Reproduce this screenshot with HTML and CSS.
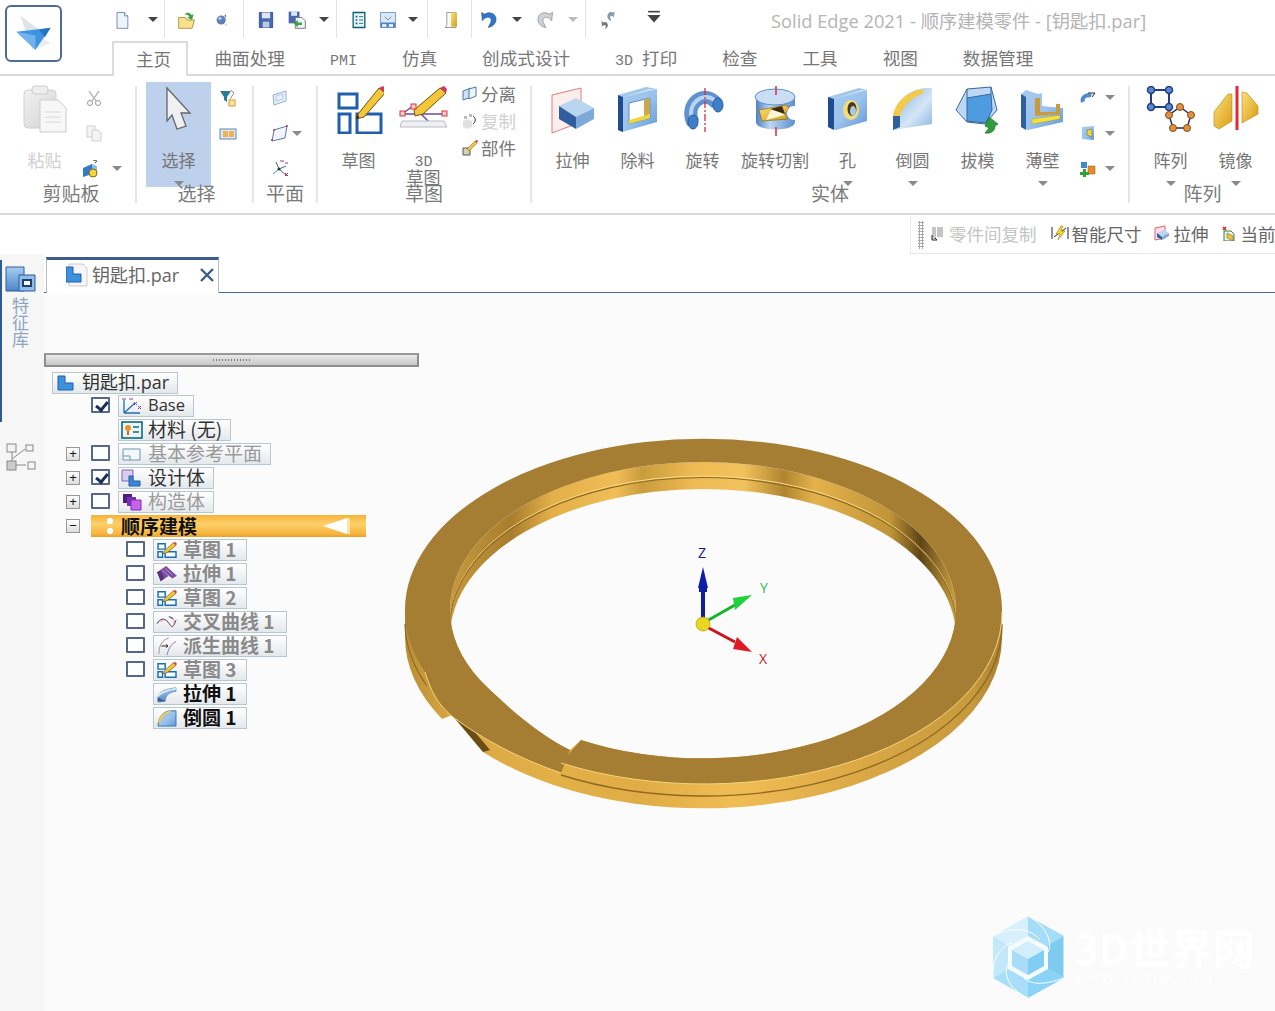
FILE: index.html
```html
<!DOCTYPE html>
<html lang="zh">
<head>
<meta charset="utf-8">
<title>Solid Edge 2021</title>
<link rel="stylesheet" href="styles.css">
</head>
<body>
<svg class="defs" aria-hidden="true">
  <defs>
    <linearGradient id="bl" x1="0" y1="0" x2="1" y2="1"><stop offset="0" stop-color="#a8cbee"/><stop offset=".55" stop-color="#9ac2ec"/><stop offset="1" stop-color="#5f97d6"/></linearGradient>
    <linearGradient id="bv" x1="0" y1="0" x2="0" y2="1"><stop offset="0" stop-color="#a9cdee"/><stop offset="1" stop-color="#4b86cc"/></linearGradient>
    <linearGradient id="bc" x1="0" y1="0" x2="1" y2="0"><stop offset="0" stop-color="#4f80c0"/><stop offset=".35" stop-color="#bcd6f0"/><stop offset="1" stop-color="#5c90cf"/></linearGradient>
    <linearGradient id="br" x1="0" y1="0" x2="1" y2="1"><stop offset="0" stop-color="#7fafe0"/><stop offset=".6" stop-color="#d5e6f6"/><stop offset="1" stop-color="#8ab4e2"/></linearGradient>
    <linearGradient id="yl" x1="0" y1="0" x2="1" y2="1"><stop offset="0" stop-color="#fbe07a"/><stop offset="1" stop-color="#d99b14"/></linearGradient>
    <linearGradient id="clip" x1="0" y1="0" x2="1" y2="1"><stop offset="0" stop-color="#f2f2f2"/><stop offset="1" stop-color="#d2d2d2"/></linearGradient>
    <linearGradient id="wall" x1="0" y1="0" x2="1" y2="0">
      <stop offset="0" stop-color="#b98d35"/><stop offset=".08" stop-color="#d9a843"/><stop offset=".25" stop-color="#e3af47"/><stop offset=".4" stop-color="#e0ac45"/>
      <stop offset=".55" stop-color="#f0bd55"/><stop offset=".75" stop-color="#dca946"/><stop offset=".95" stop-color="#c69a3c"/><stop offset="1" stop-color="#a87f30"/>
    </linearGradient>
    <linearGradient id="iwall" x1="0" y1="0" x2="1" y2="0">
      <stop offset="0" stop-color="#c59a3d"/><stop offset=".12" stop-color="#a87d2e"/><stop offset=".2" stop-color="#e2af48"/><stop offset=".33" stop-color="#f0bd56"/><stop offset=".38" stop-color="#c99c3d"/>
      <stop offset=".48" stop-color="#eeba53"/><stop offset=".58" stop-color="#f2c25c"/><stop offset=".66" stop-color="#b08530"/><stop offset=".72" stop-color="#e4b24b"/>
      <stop offset=".87" stop-color="#c09538"/><stop offset=".93" stop-color="#5f4415"/><stop offset="1" stop-color="#caa040"/>
    </linearGradient>
    <symbol id="sk" viewBox="0 0 24 20">
      <path d="M2 3h8v6H2zM2 12h5v6H2zM10 12h12v6H10z" fill="#fff" stroke="#1570b8" stroke-width="1.6"/>
      <path d="M9 11 19 2l3 3-10 8-4 1z" fill="#f2c335" stroke="#7a5a12" stroke-width=".7"/><path d="M19 2l3 3 1-2-2-2z" fill="#d8344c"/>
    </symbol>
  </defs>
</svg>

<div class="top">
  <div class="logo-wrap">
    <div class="logo">
      <svg viewBox="0 0 57 57" width="54" height="54"><path d="M14 9 38 27 27 45z" fill="#dfe3ec"/><path d="M27 27 46 38 29 45z" fill="#e9edf2"/><path d="M10 26 46 22 30 45z" fill="#3f94e0"/><path d="M10 26 30 30 30 45z" fill="#73b3ec"/><path d="M34 24 46 22 40 32z" fill="#2574c4"/></svg>
    </div>
  </div>
  <div class="top-right">
    <div class="qat">
      <div class="qg qa">
        <svg class="qi" viewBox="0 0 24 24"><path d="M6 3h9l4 4v15H6z" fill="#eef4fb" stroke="#5c7ea8"/><path d="M15 3v4h4" fill="#fff" stroke="#5c7ea8"/></svg>
        <i class="caret dk"></i>
      </div>
      <div class="qg qb">
        <svg class="qi" viewBox="0 0 24 24"><path d="M2 9h8l2 3h9l-3 10H2z" fill="#f8e08c" stroke="#a88a2c"/><path d="M9 5c4-3 7-2 8 1l3-1-2 7-6-3 3-1c-1-2-3-3-6-3z" fill="#3da33a"/></svg>
        <svg class="qi" viewBox="0 0 24 24"><circle cx="11" cy="12" r="5.5" fill="#5f7fb8"/><circle cx="9.500" cy="10" r="2" fill="#b9cbea"/><path d="M15 5l2 2-1 2z" fill="#223c6e"/><path d="M13 18l6-1-2 2z" fill="#c9c9c9"/></svg>
      </div>
      <div class="qg qc">
        <svg class="qi" viewBox="0 0 24 24"><path d="M4 3h16v18H4z" fill="#4868ae" stroke="#2f4684"/><path d="M7 3h10v7H7z" fill="#dce6f4"/><path d="M8 14h8v7H8z" fill="#bccbe4"/></svg>
        <svg class="qi" viewBox="0 0 24 24"><path d="M2 2h13v14H2z" fill="#4868ae"/><path d="M5 2h7v5H5z" fill="#dce6f4"/><path d="M10 9h8l4 4v9H10z" fill="#eef4fb" stroke="#667"/><path d="M8 16l5-4v3h5v3h-5v3z" fill="#3da33a"/></svg>
        <i class="caret dk"></i>
      </div>
      <div class="qg qd">
        <svg class="qi" viewBox="0 0 24 24"><path d="M5 3h14v18H5z" fill="#eaf4f4" stroke="#0f5f78" stroke-width="1.6"/><path d="M8 7h2v2H8zM8 11h2v2H8zM8 15h2v2H8z" fill="#0f5f78"/><path d="M12 8h5M12 12h5M12 16h5" stroke="#0f5f78"/></svg>
        <svg class="qi" viewBox="0 0 24 24"><path d="M3 3h18v18H3z" fill="#d8e8f6" stroke="#6a8fbc"/><path d="M3 15h18v6H3z" fill="#4e86c4"/><path d="M8 8l4 4 4-4" stroke="#777" fill="none"/><path d="M5 17h5v3H5zM13 17h5v3h-5z" fill="#fff"/></svg>
        <i class="caret dk"></i>
      </div>
      <div class="qg qe">
        <svg class="qi" viewBox="0 0 24 24"><path d="M5 21c2-1 2-3 2-5V3h11v18z" fill="none" stroke="#888"/><path d="M12 3h7v17h-7z" fill="url(#yl)"/></svg>
      </div>
      <div class="qg qf">
        <svg class="qi" viewBox="0 0 24 24"><path d="M3 3l1 10 3-3c5-3 9 0 7 5l-3 6c7-1 11-7 9-13-2-5-9-6-13-3L3 3z" fill="#3174c8" stroke="#1e4f96" stroke-width=".6"/></svg>
        <i class="caret dk"></i>
        <svg class="qi" viewBox="0 0 24 24"><path d="M21 3l-1 10-3-3c-5-3-9 0-7 5l3 6c-7-1-11-7-9-13 2-5 9-6 13-3l4-2z" fill="#cfd3d8" stroke="#7d8288" stroke-width=".8"/></svg>
        <i class="caret lt"></i>
      </div>
      <div class="qg qh">
        <svg class="qi" viewBox="0 0 24 24"><path d="M4 13l1 7 2-2c2 0 3 1 2 3l-1 2c3-1 5-4 3-7-1-2-3-2-5-1z" fill="#777"/><path d="M20 2l-1 7-2-2c-2 0-3 1-2 3l1 3c-4-1-6-5-4-8 1-3 4-3 6-2z" fill="#8a9aa8"/></svg>
        <svg class="qi" viewBox="0 0 24 24"><path d="M5 1h14v2H5z" fill="#444"/><path d="M4 6h16l-8 9z" fill="#444"/></svg>
      </div>
      <div class="title">Solid Edge 2021 - 顺序建模零件 - [钥匙扣.par]</div>
    </div>
    <div class="tabs">
      <div class="tab on">主页</div>
      <div class="tab">曲面处理</div>
      <div class="tab"><span class="mono">PMI</span></div>
      <div class="tab">仿真</div>
      <div class="tab">创成式设计</div>
      <div class="tab"><span class="mono m3d">3D</span> 打印</div>
      <div class="tab">检查</div>
      <div class="tab">工具</div>
      <div class="tab">视图</div>
      <div class="tab">数据管理</div>
    </div>
  </div>
</div>

<div class="ribbon">
  <section class="group g1">
    <div class="tools">
      <div class="big off">
        <svg class="ic" viewBox="0 0 50 50"><rect x="4" y="6" width="32" height="38" rx="4" fill="url(#clip)" stroke="#d0d0d0"/><rect x="12" y="2" width="16" height="8" rx="3" fill="#eee" stroke="#ccc"/><path d="M20 16h18l8 8v24H20z" fill="#f7f7f7" stroke="#ccc"/><path d="M25 28h16M25 33h16M25 38h16" stroke="#d8d8d8"/></svg>
        <span class="lab">粘贴</span>
      </div>
      <div class="col">
        <div class="sm"><svg class="si" viewBox="0 0 18 18"><path d="M4 2l7 10M14 2 7 12" stroke="#bbb" stroke-width="1.4"/><circle cx="5" cy="14" r="2.500" fill="none" stroke="#999"/><circle cx="13" cy="14" r="2.500" fill="none" stroke="#999"/></svg></div>
        <div class="sm"><svg class="si" viewBox="0 0 18 18"><path d="M2 2h8v11H2z" fill="#f4f4f4" stroke="#d0d0d0"/><path d="M7 6h6l3 3v8H7z" fill="#f4f4f4" stroke="#d0d0d0"/></svg></div>
        <div class="sm tail12"><svg class="si" viewBox="0 0 18 18"><path d="M1 8l9-4v10l-9 3z" fill="#2f7dc8"/><path d="M10 4l5 2v9l-5-1z" fill="#8fbde8"/><circle cx="11" cy="13" r="4" fill="#f4d63c" stroke="#8a6a10"/><path d="M11 0l4 1-2 2" stroke="#555" fill="none"/></svg><i class="caret"></i></div>
      </div>
    </div>
    <div class="glab">剪贴板</div>
  </section>
  <div class="sep"></div>

  <section class="group g2">
    <div class="tools">
      <div class="big on">
        <svg class="ic" viewBox="0 0 50 50"><path d="M13 4 36 29H27l5 13-9 3-5-14-5 6z" fill="#eef0f2" stroke="#666" stroke-width="1.300"/></svg>
        <span class="lab">选择</span>
        <i class="caret below"></i>
      </div>
      <div class="col">
        <div class="sm"><svg class="si" viewBox="0 0 18 18"><path d="M1 2h11L8 8v5L5 11V8z" fill="#2a7f95"/><path d="M12 1l3 3-4 6" stroke="#888" fill="none"/><rect x="10" y="11" width="6" height="6" fill="#fbe7a0" stroke="#d09a20"/></svg></div>
        <div class="sm"><svg class="si" viewBox="0 0 18 18"><rect x="1" y="5" width="16" height="10" fill="#dce9f7" stroke="#5d87b8"/><rect x="4" y="7" width="5" height="6" fill="#f0b04a"/><rect x="10" y="7" width="5" height="6" fill="#f0b04a"/></svg></div>
      </div>
    </div>
    <div class="glab">选择</div>
  </section>
  <div class="sep"></div>

  <section class="group g3">
    <div class="tools">
      <div class="col">
        <div class="sm"><svg class="si" viewBox="0 0 18 18"><path d="M2 6l13-4v10L3 16z" fill="#e7f0f9" stroke="#93b3d6"/><path d="M5 7l7-2v5l-7 2z" fill="none" stroke="#b4cbe4"/></svg></div>
        <div class="sm tail3"><svg class="si" viewBox="0 0 18 18"><path d="M3 6l13-4-2 12-13 3z" fill="#f2f6fb" stroke="#5a78a8"/><circle cx="3" cy="6" r="1" fill="#d33"/><circle cx="16" cy="2" r="1" fill="#d33"/><circle cx="1" cy="16" r="1" fill="#d33"/></svg><i class="caret"></i></div>
        <div class="sm"><svg class="si" viewBox="0 0 18 18"><path d="M8 9 5 2M8 9l7-3M8 9l8 7" stroke="#486898" fill="none"/><path d="M2 14l6-5" stroke="#3aa"/><path d="M9 1h4M14 3h3" stroke="#8a3aa8"/><circle cx="8" cy="9" r="1.500" fill="#234"/><path d="M14 13l3 3m0-3-3 3" stroke="#c33"/></svg></div>
      </div>
    </div>
    <div class="glab">平面</div>
  </section>
  <div class="sep"></div>

  <section class="group g4">
    <div class="tools">
      <div class="big">
        <svg class="ic" viewBox="0 0 50 50"><path d="M5 10h18v14H5zM5 30h11v19H5zM23 30h24v19H23z" fill="#fff" stroke="#1f5fae" stroke-width="3"/><path d="M24 30 45 4l6 5-21 24-8 2z" fill="#f4c63a" stroke="#6d5412"/><path d="M45 4l6 5 1-4-3-3z" fill="#d9345c"/><path d="M24 30l-2 5 3-1z" fill="#222"/></svg>
        <span class="lab">草图</span>
      </div>
      <div class="big">
        <svg class="ic" viewBox="0 0 50 50"><path d="M3 30 14 22M14 22l20 20M3 30h42" stroke="#6e4ba0" stroke-width="1.500" fill="none"/><path d="M3 37h42l3 6H1z" fill="#eef0f4" stroke="#b8bcc4"/><path d="M15 26 41 4l6 5-23 21-8 2z" fill="#f4c63a" stroke="#6d5412"/><path d="M41 4l6 5 1-4-3-3z" fill="#d9345c"/><g fill="#fbd0d0" stroke="#d33"><rect x="1" y="27" width="5" height="5"/><rect x="12" y="20" width="5" height="5"/><rect x="43" y="27" width="5" height="5"/></g></svg>
        <span class="lab two"><span class="mono">3D</span><br>草图</span>
      </div>
      <div class="col tx">
        <div class="sm"><svg class="sx" viewBox="0 0 16 16"><path d="M1 5l8-3v9l-8 3z" fill="#cfe2f5" stroke="#4a78a8"/><path d="M7 3l7-2v9l-7 3z" fill="#eef5fc" stroke="#4a78a8"/></svg><span>分离</span></div>
        <div class="sm off"><svg class="sx" viewBox="0 0 16 16"><path d="M1 8l5-2 4 2v6l-5 2-4-2z" fill="#e0e0e0"/><path d="M2 3h3v3H2zM7 1h3v3H7z" fill="#bbb"/><path d="M11 3c3 2 3 6 0 8" stroke="#333" fill="none"/></svg><span>复制</span></div>
        <div class="sm"><svg class="sx" viewBox="0 0 16 16"><path d="M1 8h7v7H1z" fill="#d7d2b0" stroke="#555"/><path d="M5 9l8-8 2 2-8 8z" fill="#f2c34a" stroke="#7a5a12" stroke-width=".5"/><path d="M13 1l2 2 1-2-1-1z" fill="#d33"/></svg><span>部件</span></div>
      </div>
    </div>
    <div class="glab">草图</div>
  </section>
  <div class="sep"></div>

  <section class="group g5">
    <div class="tools">
      <div class="big">
        <svg class="ic" viewBox="0 0 50 50"><path d="M4 9 33 2V36L4 47z" fill="#fdeeee" stroke="#e27a7a"/><path d="M11 20 28 12 46 22 28 31z" fill="#b9d5ef"/><path d="M11 20 28 31V43L11 33z" fill="#2f5f9e"/><path d="M28 31 46 22V33L28 43z" fill="#7ea9d8"/></svg>
        <span class="lab">拉伸</span>
      </div>
      <div class="big">
        <svg class="ic" viewBox="0 0 50 50"><path d="M5 9 33 1 44 3V36L9 46 5 44z" fill="url(#bl)"/><path d="M5 9 10 11V46L5 44z" fill="#1f4c8e"/><path d="M10 11 36 3 44 3 10 11z" fill="#cfe2f5"/><path d="M16 17 37 12V32L16 38z" fill="#fff" stroke="#5d8fc8"/><path d="M31 14 37 12V32L31 34z" fill="#c9a94a"/><path d="M16 34 37 28V32L16 38z" fill="#f2d53a"/></svg>
        <span class="lab">除料</span>
      </div>
      <div class="big">
        <svg class="ic" viewBox="0 0 50 50"><path d="M15 37C6 18 26 2 39 18" stroke="#5f90d0" stroke-width="13" fill="none"/><path d="M14 32C9 18 25 5 36 14" stroke="#b7d4f0" stroke-width="4" fill="none"/><ellipse cx="15" cy="36" rx="5" ry="7" fill="#3e7fc8" stroke="#245a9e"/><ellipse cx="40" cy="19" rx="5" ry="7" fill="#3e7fc8" stroke="#245a9e"/><path d="M27 2V46" stroke="#d32f3f" stroke-dasharray="7 2 2 2" stroke-width="1.300"/></svg>
        <span class="lab">旋转</span>
      </div>
      <div class="big wide">
        <svg class="ic" viewBox="0 0 50 50"><path d="M6 11V36C6 46 45 46 45 36V11z" fill="url(#bc)"/><ellipse cx="25" cy="11" rx="20" ry="8" fill="#c9def2" stroke="#5c90cf"/><path d="M9 24 36 19 39 22 35 28 38 33 12 35z" fill="url(#yl)" stroke="#7a5c12" stroke-width=".6"/><path d="M22 22 35 29 16 34z" fill="#fff6d8"/><path d="M20 23 32 20 35 28z" fill="#3a2c10"/><circle cx="44" cy="27" r="7" fill="#fff"/><path d="M26 0V9M26 41V50" stroke="#d32f3f" stroke-width="1.500"/></svg>
        <span class="lab">旋转切割</span>
      </div>
      <div class="big">
        <svg class="ic" viewBox="0 0 50 50"><path d="M5 11 36 2 44 4V35L13 44 5 41z" fill="url(#bl)"/><path d="M5 11 11 13V44L5 41z" fill="#1f4c8e"/><path d="M11 13 38 4 44 4 11 13z" fill="#cfe2f5"/><ellipse cx="28" cy="24" rx="8" ry="10" fill="#f2dc7a"/><ellipse cx="29" cy="23" rx="4.500" ry="7" fill="#4a3a18"/><ellipse cx="30" cy="25" rx="3" ry="5" fill="#a8c8e8"/></svg>
        <span class="lab">孔</span>
        <i class="caret below"></i>
      </div>
      <div class="big">
        <svg class="ic" viewBox="0 0 50 50"><path d="M5 44C5 20 16 4 38 2H44V38z" fill="url(#br)"/><path d="M5 30C7 17 18 6 34 3L36 7C24 11 15 20 12 30z" fill="#f2c94a"/><path d="M5 30H12V41L5 44z" fill="#2f5f9e"/></svg>
        <span class="lab">倒圆</span>
        <i class="caret below"></i>
      </div>
      <div class="big">
        <svg class="ic" viewBox="0 0 50 50"><path d="M3 24 14 3 38 1 44 24 32 38 14 36z" fill="#bcd8f2" stroke="#36679f"/><path d="M14 12 38 8 39 24 33 37 14 35z" fill="#4f9be0" stroke="#36679f"/><path d="M14 3 14 12M38 1 38 8" stroke="#36679f"/><path d="M32 40 36 31 45 38 42 40C42 45 38 48 32 47L36 42z" fill="#2f9e3a" stroke="#136a22" stroke-width=".6"/></svg>
        <span class="lab">拔模</span>
      </div>
      <div class="big">
        <svg class="ic" viewBox="0 0 50 50"><path d="M3 8 8 4 20 8 24 7V20L45 22V36L10 44 3 41z" fill="url(#bl)"/><path d="M3 8 8 11V44L3 41z" fill="#2f5f9e"/><path d="M17 30V12H22V26H38V18H42V28z" fill="#c99a3c"/><path d="M14 33 42 29V33L14 38z" fill="#f2e23a" stroke="#a88a2c" stroke-width=".4"/></svg>
        <span class="lab">薄壁</span>
        <i class="caret below"></i>
      </div>
      <div class="col c5">
        <div class="sm tail9"><svg class="sx" viewBox="0 0 16 16"><path d="M3 12c-2-5 4-8 8-6" stroke="#4f8ad0" stroke-width="4" fill="none"/><path d="M8 3l7 0-3 4" fill="none" stroke="#222"/></svg><i class="caret"></i></div>
        <div class="sm tail9"><svg class="sx" viewBox="0 0 16 16"><path d="M2 2 14 1V15L2 14z" fill="url(#bl)"/><path d="M7 5 12 4V12L7 10z" fill="#f2d53a" stroke="#555" stroke-width=".5"/></svg><i class="caret"></i></div>
        <div class="sm tail9"><svg class="sx" viewBox="0 0 16 16"><path d="M1 1h6v6H1z" fill="#3d86d0"/><path d="M8 5h7v8H8z" fill="#e88a2c" stroke="#a05a10" stroke-width=".5"/><path d="M3 8h3v3h3v3H6v2H3v-2H0v-3h3z" fill="#2fa33a"/></svg><i class="caret"></i></div>
      </div>
    </div>
    <div class="glab">实体</div>
  </section>
  <div class="sep"></div>

  <section class="group g6">
    <div class="tools">
      <div class="big">
        <svg class="ic" viewBox="0 0 50 50"><path d="M5 4H23V21H5z" fill="none" stroke="#1f3f8a" stroke-width="2"/><g fill="#5f86d0" stroke="#1f3f8a" stroke-width="1.500"><circle cx="5" cy="4" r="3.500"/><circle cx="23" cy="4" r="3.500"/><circle cx="5" cy="21" r="3.500"/><circle cx="23" cy="21" r="3.500"/></g><path d="M34 21 45 29 41 42H27L23 29z" fill="none" stroke="#1f2f6a" stroke-width="1.500"/><g fill="#e0913c" stroke="#8a4a20"><circle cx="34" cy="21" r="3.500"/><circle cx="45" cy="29" r="3.500"/><circle cx="41" cy="42" r="3.500"/><circle cx="27" cy="42" r="3.500"/><circle cx="23" cy="29" r="3.500"/></g></svg>
        <span class="lab">阵列</span>
        <i class="caret below"></i>
      </div>
      <div class="big">
        <svg class="ic" viewBox="0 0 50 50"><path d="M3 26 17 8 21 8V35L8 43 3 40z" fill="url(#yl)" stroke="#b8860b" stroke-width=".6"/><path d="M31 6 36 7 47 20V28L31 37z" fill="url(#yl)" stroke="#b8860b" stroke-width=".6"/><path d="M26 0V44" stroke="#e02a30" stroke-width="3"/></svg>
        <span class="lab">镜像</span>
        <i class="caret below"></i>
      </div>
    </div>
    <div class="glab">阵列</div>
  </section>
</div>

<div class="strip">
  <div class="cmdbar">
    <i class="grip"></i>
    <div class="cmd off"><svg class="sx" viewBox="0 0 16 16"><path d="M3 2h4v12H3zM8 2h6v10H8z" fill="#c4c4c4"/><path d="M3 10v5h5l-2-2" stroke="#222" fill="none"/></svg><span>零件间复制</span></div>
    <div class="cmd m10"><svg class="sy" viewBox="0 0 18 16"><path d="M1 2v12M17 2v12" stroke="#222"/><path d="M3 12 15 3" stroke="#222"/><path d="M10 1 5 9h4l-2 6 7-9h-4l2-5z" fill="#f4d52c" stroke="#8a6a10" stroke-width=".5"/></svg><span>智能尺寸</span></div>
    <div class="cmd m12"><svg class="sx" viewBox="0 0 16 16"><path d="M1 3l10-2v12L1 15z" fill="#fde" stroke="#d66"/><path d="M3 8l7-3 5 3-7 4z" fill="#b9d5ef"/><path d="M3 8l5 4v3L3 12z" fill="#2f5f9e"/><path d="M8 12l7-4v3l-7 4z" fill="#7ea9d8"/></svg><span>拉伸</span></div>
    <div class="cmd m12"><svg class="sx" viewBox="0 0 16 16"><path d="M2 2l3 3m0-3L2 5" stroke="#d22" stroke-width="1.500"/><path d="M3 6h7l3 3v7H3z" fill="#eef5e8" stroke="#3a7a4a"/><path d="M6 8l6 3v5l-6-3z" fill="#f2c335" stroke="#555" stroke-width=".5"/></svg><span>当前</span></div>
  </div>
</div>

<div class="main">
  <aside class="rail">
    <div class="rail-tab">
      <svg width="31" height="28" viewBox="0 0 31 28" class="rail-ic"><path d="M1 2h18v24H1z" fill="url(#bv)" stroke="#2f5f9e"/><path d="M14 10h16v16H14z" fill="#8fbde8" stroke="#2f5f9e"/><path d="M18 15h8v6h-8z" fill="#fff" stroke="#1f3f6e" stroke-width="2"/></svg>
      <span class="rail-text">特征库</span>
    </div>
    <svg width="31" height="28" viewBox="0 0 31 28" class="rail-ic2"><path d="M7 8v14h14M7 16l13-10" stroke="#888" fill="none"/><rect x="2" y="1" width="9" height="8" fill="#f4f4f4" stroke="#888"/><rect x="21" y="2" width="7" height="6" fill="#f4f4f4" stroke="#888"/><rect x="2" y="18" width="9" height="9" fill="#ccc" stroke="#888"/><rect x="23" y="19" width="7" height="7" fill="#f4f4f4" stroke="#888"/></svg>
  </aside>
  <div class="work">
    <div class="docbar">
      <div class="doctab">
        <svg width="22" height="24" viewBox="0 0 22 24"><path d="M3 1h14l4 4v18H3z" fill="#f6f6f6" stroke="#ccc"/><path d="M0 4h7v7h8v8H0z" fill="#3d92dc" stroke="#1f5fae"/></svg>
        <span class="docname">钥匙扣.par</span>
        <svg class="x" width="14" height="14" viewBox="0 0 14 14"><path d="M1 1 13 13M13 1 1 13" stroke="#3d5c8a" stroke-width="2.400"/></svg>
      </div>
    </div>
    <div class="pane">
      <svg class="scene" viewBox="44 293 1231 718" width="1231" height="718">
        <defs>
          <path id="hole" d="M450 610A253 148 0 0 1 956 610A253 148 0 0 1 581 740L570 750C540 735 510 710 480 680A253 148 0 0 1 450 610Z"/>
          <clipPath id="holeclip"><use href="#hole"/></clipPath>
        </defs>
        <path d="M405 610V637A298 171 0 0 0 442 719L452 715L483 752A298 171 0 0 0 1002 637V610Z" fill="url(#wall)"/>
        <path d="M452 715 483 752 490 750 458 712z" fill="#6a4c16"/>
        <path d="M561 775A298 171 0 0 0 1002 624" fill="none" stroke="#8d6a24" stroke-width="1.400"/>
        <path d="M405 624A298 171 0 0 0 427 686" fill="none" stroke="#8d6a24" stroke-width="1.200"/>
        <use href="#hole" fill="url(#iwall)"/>
        <g clip-path="url(#holeclip)">
          <path d="M450 624A253 148 0 0 1 956 624" fill="none" stroke="#fcd987" stroke-width="1"/>
          <path d="M450 625.500A253 148 0 0 1 956 625.500" fill="none" stroke="#8d6a24" stroke-width="1.200"/>
          <use href="#hole" y="27" fill="#fbfbfb"/>
        </g>
        <path d="M405 610A298 171 0 0 1 1002 610A298 171 0 0 1 561 763L581 740A253 148 0 0 0 956 610A253 148 0 0 0 450 610A253 148 0 0 0 480 680C510 710 540 735 570 750L561 773C530 762 490 745 453 717C440 706 432 695 425 672A298 171 0 0 1 405 610Z" fill="#a67e33"/>
        <path d="M561 773C530 762 490 745 453 717C440 706 432 695 425 672M561 763A298 171 0 0 0 1002 612" fill="none" stroke="#f8d47a" stroke-width="1"/>

        <path d="M703 622V590" stroke="#0d1f9a" stroke-width="4"/><path d="M703 567 708 588H707V592H699V588H698z" fill="#0d1fa8"/>
        <path d="M705 622 735 605" stroke="#16b52a" stroke-width="3"/><path d="M752 595 735 610 733 598z" fill="#1fd23a"/>
        <path d="M705 626 735 642" stroke="#c8141e" stroke-width="3"/><path d="M752 652 733 649 737 637z" fill="#e01a22"/>
        <circle cx="703" cy="624" r="7" fill="#ebd61f" stroke="#b09a10" stroke-width=".7"/>
        <text x="702" y="558" class="ax az">Z</text>
        <text x="764" y="593" class="ax ay">Y</text>
        <text x="763" y="664" class="ax ar">X</text>

        <g class="wm">
          <path d="M1028 916 1064 936 1064 957 1044 948 1028 938z" fill="#a5dcf8"/>
          <path d="M1028 916 993 936 1012 948 1028 938z" fill="#d7f0fc"/>
          <path d="M993 936 993 978 1012 967 1012 948z" fill="#c1e8fb"/>
          <path d="M993 978 1028 998 1028 975 1012 967z" fill="#a9def9"/>
          <path d="M1028 998 1064 978 1044 967 1028 975z" fill="#8ad2f6"/>
          <path d="M1064 978 1064 936 1044 948 1044 967z" fill="#7fcbf0"/>
          <path d="M1028 936 1048 947V969L1028 980 1008 969V947z" fill="#f6fbfe"/>
          <path d="M1028 941 1044 950 1028 959 1012 950z" fill="#d2edfc"/>
          <path d="M1012 950 1028 959V975L1012 966z" fill="#a8dcf8"/>
          <path d="M1044 950 1028 959V975L1044 966z" fill="#82cdf3"/>
          <path d="M1028 916C1050 928 1052 946 1048 952M1064 936V978M1064 978C1042 986 1030 984 1024 978M1028 998C1006 988 1004 972 1008 964M993 978C992 956 1002 946 1012 943M993 936C1012 926 1030 928 1040 940" fill="none" stroke="#fff" stroke-width="1"/>
          <text x="1074" y="965" class="wm1">3D世界网</text>
          <text x="1075" y="983" class="wm2">WWW.3DSJW.COM</text>
        </g>
      </svg>

      <div class="tree">
        <div class="splitter"><i></i></div>
        <ul class="nodes">
          <li class="row root"><div class="node n-root">
            <svg class="ti" viewBox="0 0 22 18"><path d="M1 2h7v7h8v7H1z" fill="#3d92dc" stroke="#1f5fae"/></svg><span>钥匙扣.par</span></div></li>
          <li class="row l1"><b class="cb chk"></b><div class="node">
            <svg class="ti" viewBox="0 0 22 18"><path d="M3 16 14 6M3 16h16M3 16V3" stroke="#1f6fae" stroke-width="1.300" fill="none"/><path d="M1 2h4M8 2h4M13 8l3-3m0 3-3-3M17 9l3 3m0-3-3 3" stroke="#8a3aa8"/></svg><span class="lat">Base</span></div></li>
          <li class="row l1"><b class="cb none"></b><div class="node">
            <svg class="ti" viewBox="0 0 22 18"><rect x="1" y="1" width="20" height="16" fill="#eaf4f4" stroke="#0f6a80" stroke-width="1.600"/><circle cx="7" cy="7" r="3" fill="#f0922c"/><path d="M6 10h2v4H6z" fill="#c96a1c"/><path d="M12 6h6M12 11h6" stroke="#0f6a80" stroke-width="1.600"/></svg><span>材料 (无)</span></div></li>
          <li class="row l0"><b class="exp">+</b><b class="cb"></b><div class="node dim">
            <svg class="ti" viewBox="0 0 22 18"><path d="M2 4h17v11H2z" fill="#f2f8fc" stroke="#6a98b8"/><path d="M2 11h7v4" fill="none" stroke="#6a98b8"/></svg><span>基本参考平面</span></div></li>
          <li class="row l0"><b class="exp">+</b><b class="cb chk"></b><div class="node">
            <svg class="ti" viewBox="0 0 22 18"><path d="M1 1h11v11H1z" fill="#d8cdf0" stroke="#7a6ab0"/><path d="M8 7h4v5h7v5H8z" fill="#3d86d0" stroke="#1f5fae"/></svg><span>设计体</span></div></li>
          <li class="row l0"><b class="exp">+</b><b class="cb"></b><div class="node dim">
            <svg class="ti" viewBox="0 0 22 18"><path d="M2 1h9v9H2z" fill="#4d1a86"/><path d="M6 4h9v9H6z" fill="#7a2fb8"/><path d="M10 7h10v10H10z" fill="#c564e8" stroke="#7a2fb8"/></svg><span>构造体</span></div></li>
          <li class="row l0"><b class="exp">−</b><div class="seqbar"><i class="seqgrip"></i><span>顺序建模</span><svg class="seqarrow" width="27" height="18" viewBox="0 0 27 18"><path d="M0 9 24 1V17z" fill="#fff"/><path d="M24 1h3v16h-3z" fill="#fde3a8"/></svg></div></li>
          <li class="row l2"><b class="cb"></b><div class="node b"><svg class="ti" viewBox="0 0 24 20"><use href="#sk"/></svg><span>草图 1</span></div></li>
          <li class="row l2"><b class="cb"></b><div class="node b"><svg class="ti" viewBox="0 0 24 20"><path d="M1 8 11 1 23 12 18 15 14 12 5 18z" fill="#7b4d9e"/><path d="M1 8 5 18 9 15 5 6z" fill="#5a3380"/><path d="M7 6l8 7M10 4l8 7" stroke="#b79ad0"/></svg><span>拉伸 1</span></div></li>
          <li class="row l2"><b class="cb"></b><div class="node b"><svg class="ti" viewBox="0 0 24 20"><use href="#sk"/></svg><span>草图 2</span></div></li>
          <li class="row l2"><b class="cb"></b><div class="node b wide2"><svg class="ti" viewBox="0 0 24 20"><path d="M1 12C4 6 9 5 13 10S18 19 22 8" fill="none" stroke="#1a2a70"/><path d="M5 10c2-3 4-3 8-1M16 6c4 0 5 4 3 9" fill="none" stroke="#e87a6a"/><path d="M14 4l5 2" stroke="#1a2a70"/></svg><span>交叉曲线 1</span></div></li>
          <li class="row l2"><b class="cb"></b><div class="node b wide2"><svg class="ti" viewBox="0 0 24 20"><path d="M3 19C3 10 6 4 14 1" fill="none" stroke="#a87a90"/><path d="M12 21C13 14 16 8 22 5" fill="none" stroke="#8a6aa0"/><path d="M6 10h7l-2-2m2 2-2 2" stroke="#111" fill="none"/></svg><span>派生曲线 1</span></div></li>
          <li class="row l2"><b class="cb"></b><div class="node b"><svg class="ti" viewBox="0 0 24 20"><use href="#sk"/></svg><span>草图 3</span></div></li>
          <li class="row l2"><b class="cb none"></b><div class="node b blk"><svg class="ti" viewBox="0 0 24 20"><path d="M2 19C0 8 8 5 22 3V7C14 8 10 12 10 18z" fill="url(#bv)" stroke="#3c5f8c" stroke-width=".6"/><path d="M2 11C5 7 12 5 22 3V5C14 6 6 9 2 14z" fill="#dceaf8"/><path d="M2 14 10 18H2z" fill="#3c5f8c"/></svg><span>拉伸 1</span></div></li>
          <li class="row l2"><b class="cb none"></b><div class="node b blk"><svg class="ti" viewBox="0 0 24 20"><path d="M2 19C2 9 8 2 17 2H22V19z" fill="url(#bl)" stroke="#3a6ea8"/><path d="M2 15C3 8 9 3 16 2V4C10 5 6 9 5 15z" fill="#f2cd4a"/></svg><span>倒圆 1</span></div></li>
        </ul>
      </div>
    </div>
  </div>
</div>
</body>
</html>
```

FILE: styles.css
```css
* { box-sizing: border-box; }
html, body { margin: 0; padding: 0; }
body {
  width: 1275px;
  height: 1011px;
  overflow: hidden;
  background: #fff;
  color: #777;
  font-family: "Noto Sans CJK SC", "Open Sans", sans-serif;
}
.defs { position: absolute; width: 0; height: 0; }
svg { display: block; flex: none; }
.mono { font-family: "Liberation Mono", monospace; font-size: 15px; }
.m3d { margin-right: 5px; }

/* Header */
.top { display: flex; height: 74px; }
.logo-wrap { width: 107px; flex: none; padding: 5px; }
.logo {
  width: 57px; height: 57px;
  border: 2px solid #4d6d96;
  border-radius: 6px;
  background: #fff;
  display: flex; align-items: center; justify-content: center;
  overflow: hidden;
}
.top-right { flex: 1; min-width: 0; }
.qat { display: flex; align-items: flex-start; height: 41px; }
.qg {
  display: flex; align-items: center;
  height: 38px;
  border-right: 1px solid #e4e4e4;
}
.qi { width: 24px; height: 24px; padding: 2px; margin-top: 2px; }
.qa { padding: 0 3px 0 3px; gap: 11px; }
.qb { padding: 0 9px 0 10px; gap: 11px; }
.qc { padding: 0 4px 0 10px; gap: 7px; }
.qd { padding: 0 6px 0 10px; gap: 5px; }
.qe { padding: 0 8px 0 11px; }
.qf { padding: 0 4px 0 5px; gap: 8px; }
.qh { padding: 0 0 0 10px; gap: 22px; border-right: 0; }
.caret {
  display: block; flex: none;
  width: 0; height: 0;
  margin: 0 3px;
  border-left: 5px solid transparent;
  border-right: 5px solid transparent;
  border-top: 5px solid #8a8a8a;
}
.caret.dk { border-top-color: #444; }
.caret.lt { border-top-color: #bbb; }
.title {
  margin: 9px 0 0 105px;
  color: #b4b4b4;
  font-family: "Open Sans", "Noto Sans CJK SC", sans-serif;
  font-size: 18.300px;
  line-height: 24px;
  white-space: nowrap;
}
.tabs { display: flex; height: 33px; margin-left: 5px; }
.tab {
  height: 33px;
  padding: 0 22.500px;
  font-size: 17.600px;
  line-height: 33px;
  color: #777;
  white-space: nowrap;
}
.tab.on {
  position: relative;
  z-index: 1;
  width: 76px;
  height: 35px;
  padding: 0 22px;
  margin-right: 4px;
  background: #fff;
  border: 2px solid #dcdcdc;
  border-bottom: 0;
  line-height: 31px;
}

/* Ribbon */
.ribbon {
  display: flex;
  height: 141px;
  padding-top: 6px;
  border-top: 2px solid #dadada;
  border-bottom: 2px solid #dadada;
}
.sep { width: 2px; flex: none; margin: 4px 0 10px; background: #e6e6e6; }
.group { flex: none; }
.g1 { width: 135px; }
.g2 { width: 115px; }
.g3 { width: 62px; }
.g4 { width: 212px; }
.g5 { width: 596px; }
.g6 { flex: 1; }
.tools { display: flex; height: 99px; }
.g1 .tools { padding-left: 12px; }
.g2 .tools { padding-left: 9px; }
.g3 .tools { padding-left: 17px; }
.g4 .tools { padding-left: 8px; }
.g5 .tools { padding-left: 8px; }
.g6 .tools { padding-left: 8px; }
.glab {
  height: 24px;
  line-height: 24px;
  font-size: 19px;
  text-align: center;
  color: #7a7a7a;
  position: relative;
}
.g1 .glab { padding-left: 7px; }
.g2 .glab { padding-left: 4px; }
.big {
  width: 65px; height: 105px;
  flex: none;
  padding-top: 2px;
  display: flex; flex-direction: column; align-items: center;
}
.big.wide { width: 80px; }
.big.on { background: #bdd0ec; }
.ic { width: 50px; height: 50px; }
.g5 .big, .g6 .big { padding-top: 4px; }
.g5 .lab, .g6 .lab { margin-top: 12px; }
.lab {
  display: block;
  height: 24px;
  margin-top: 14px;
  font-size: 17px;
  line-height: 24px;
  color: #777;
  text-align: center;
  white-space: nowrap;
}
.lab.two { line-height: 14px; padding-top: 4px; }
.big.off .lab { color: #cfcfcf; }
.caret.below { margin-top: 9px; }
.col { display: flex; flex-direction: column; flex: none; margin: -2px 0 0 8px; }
.g3 .col { margin-left: 0; }
.sm { display: flex; align-items: center; flex: none; height: 35.500px; }
.si { width: 18px; height: 18px; }
.sx { width: 16px; height: 16px; }
.sy { width: 18px; height: 16px; }
.tail12 { gap: 9px; margin-left: -3px; }
.tail3 { gap: 0; }
.tail9 { gap: 6px; }
.col.c5 { margin-left: 5px; }
.col.tx { margin-left: 6px; }
.col.tx .sm { height: 27px; gap: 3px; font-size: 17.500px; color: #777; }
.col.tx .sm.off { color: #cfcfcf; }

/* Command strip */
.strip { display: flex; justify-content: flex-end; height: 39px; padding-top: 2px; }
.cmdbar {
  width: 365px;
  height: 37px;
  padding-left: 7px;
  display: flex; align-items: center;
  overflow: hidden;
  white-space: nowrap;
  border-left: 1px solid #e8e8e8;
  border-bottom: 1px solid #e8e8e8;
  font-size: 17.500px;
  color: #666;
}
.grip {
  width: 6px; height: 28px; flex: none;
  margin-right: 5px;
  background-image: radial-gradient(circle, #aaa 1px, transparent 1.200px);
  background-size: 3px 3px;
}
.cmd { display: flex; align-items: center; gap: 4px; flex: none; margin-top: -4px; }
.cmd.off { color: #c4c4c4; }
.m10 { margin-left: 14px; gap: 3px; }
.m12 { margin-left: 12px; }

/* Main area */
.main { display: flex; height: 757px; }
.rail { width: 44px; flex: none; background: #f6f6f6; padding-top: 6px; }
.rail-tab {
  height: 162px;
  padding: 5px 0 0 3px;
  border-left: 2px solid #2f5b95;
}
.rail-text {
  display: block;
  writing-mode: vertical-rl;
  margin: 4px 0 0 5px;
  font-size: 17px;
  line-height: 20px;
  color: #8ea6bf;
}
.rail-ic2 { margin: 21px 0 0 5px; }
.work { flex: 1; min-width: 0; display: flex; flex-direction: column; }
.docbar {
  height: 39px;
  flex: none;
  padding: 3px 0 0 2px;
  background: #fff;
  border-bottom: 1px solid #48688f;
}
.doctab {
  width: 173px; height: 36px;
  display: flex; align-items: center;
  padding: 0 0 4px 19px;
  background: #fff;
  border: 1px solid #b4bcc8;
  border-top: 3px solid #3d5c8a;
  border-bottom: 0;
}
.docname { margin-left: 4px; font-size: 18px; color: #666; font-family: "Open Sans", "Noto Sans CJK SC", sans-serif; line-height: 24px; white-space: nowrap; }
.x { margin-left: 21px; }
.pane { flex: 1; position: relative; background: #fbfbfb; overflow: hidden; }
.scene { position: absolute; left: 0; top: 0; }
.ax { font-family: "Open Sans", sans-serif; font-size: 14px; text-anchor: middle; }
.az { fill: #14208e; }
.ay { fill: #27c14a; }
.ar { fill: #c01a2c; }
.wm1 { font-family: "Noto Sans CJK SC", sans-serif; font-weight: 700; font-size: 42px; fill: #fff; }
.wm2 { font-family: "Open Sans", sans-serif; font-size: 12px; letter-spacing: 2.800px; fill: #fff; }

/* Tree */
.tree { position: relative; width: 375px; padding-top: 60px; }
.splitter {
  height: 14px;
  border: 2px solid #8e8e8e;
  border-top-color: #999;
  background: linear-gradient(#e8e8e8, #c8c8c8);
  display: flex; align-items: center; justify-content: center;
}
.splitter i {
  width: 40px; height: 2px;
  background-image: radial-gradient(circle, #777 .7px, transparent 1px);
  background-size: 3px 2px;
}
.nodes { list-style: none; margin: 4px 0 0; padding: 0; }
.row { display: flex; align-items: center; height: 24px; }
.root { padding-left: 8px; height: 23px; }
.l0 { padding-left: 22px; }
.l1 { padding-left: 47px; }
.l2 { padding-left: 82px; }
.exp {
  width: 14px; height: 14px; flex: none;
  margin-right: 11px;
  background: linear-gradient(#fff, #ddd);
  border: 1px solid #999;
  font-size: 13px; line-height: 11px; font-weight: 400;
  color: #111; text-align: center;
  font-family: "Liberation Sans", sans-serif;
}
.cb {
  width: 19px; height: 16px; flex: none;
  margin: -2px 8px 0 0;
  position: relative;
  background: #fff;
  border: 2px solid #56688a;
  border-radius: 1px;
}
.cb.none { visibility: hidden; }
.cb.chk::after {
  content: "";
  position: absolute; left: 5px; top: 0;
  width: 5px; height: 9px;
  border: solid #1c2f5c;
  border-width: 0 3px 3px 0;
  transform: rotate(40deg);
}
.node {
  display: flex; align-items: center;
  height: 22px;
  padding: 0 8px 0 2px;
  border: 1px solid #b8c6ce;
  background: linear-gradient(#fff, #e4e8ec);
  color: #333;
  font-size: 19px;
  white-space: nowrap;
}
.ti { width: 22px; height: 18px; margin-right: 5px; flex: none; }
.node span { line-height: 22px; margin-top: -2px; }
.n-root { padding-left: 4px; font-family: "Open Sans", "Noto Sans CJK SC", sans-serif; font-size: 18px; }
.n-root .ti { margin-right: 3px; }
.lat { font-family: "Open Sans", sans-serif; font-size: 16.500px; }
.dim { color: #9a9a9a; }
.b { font-weight: 700; color: #8a8a8a; width: 94px; }
.b.wide2 { width: 134px; }
.b.blk { color: #111; }
.seqbar {
  display: flex; align-items: center;
  width: 275px; height: 22px;
  padding: 0 16px 0 30px;
  position: relative;
  background: linear-gradient(#f7b238, #fdd06a 40%, #f8b63e 85%, #e9a028);
  color: #111;
  font-size: 19px; font-weight: 700;
}
.seqbar span { margin-top: -2px; }
.seqgrip {
  position: absolute; left: 15px; top: 1px;
  width: 8px; height: 20px;
  background-image: radial-gradient(circle, #fff 3px, transparent 3.500px);
  background-size: 8px 10px;
}
.seqarrow { margin-left: auto; }
```
